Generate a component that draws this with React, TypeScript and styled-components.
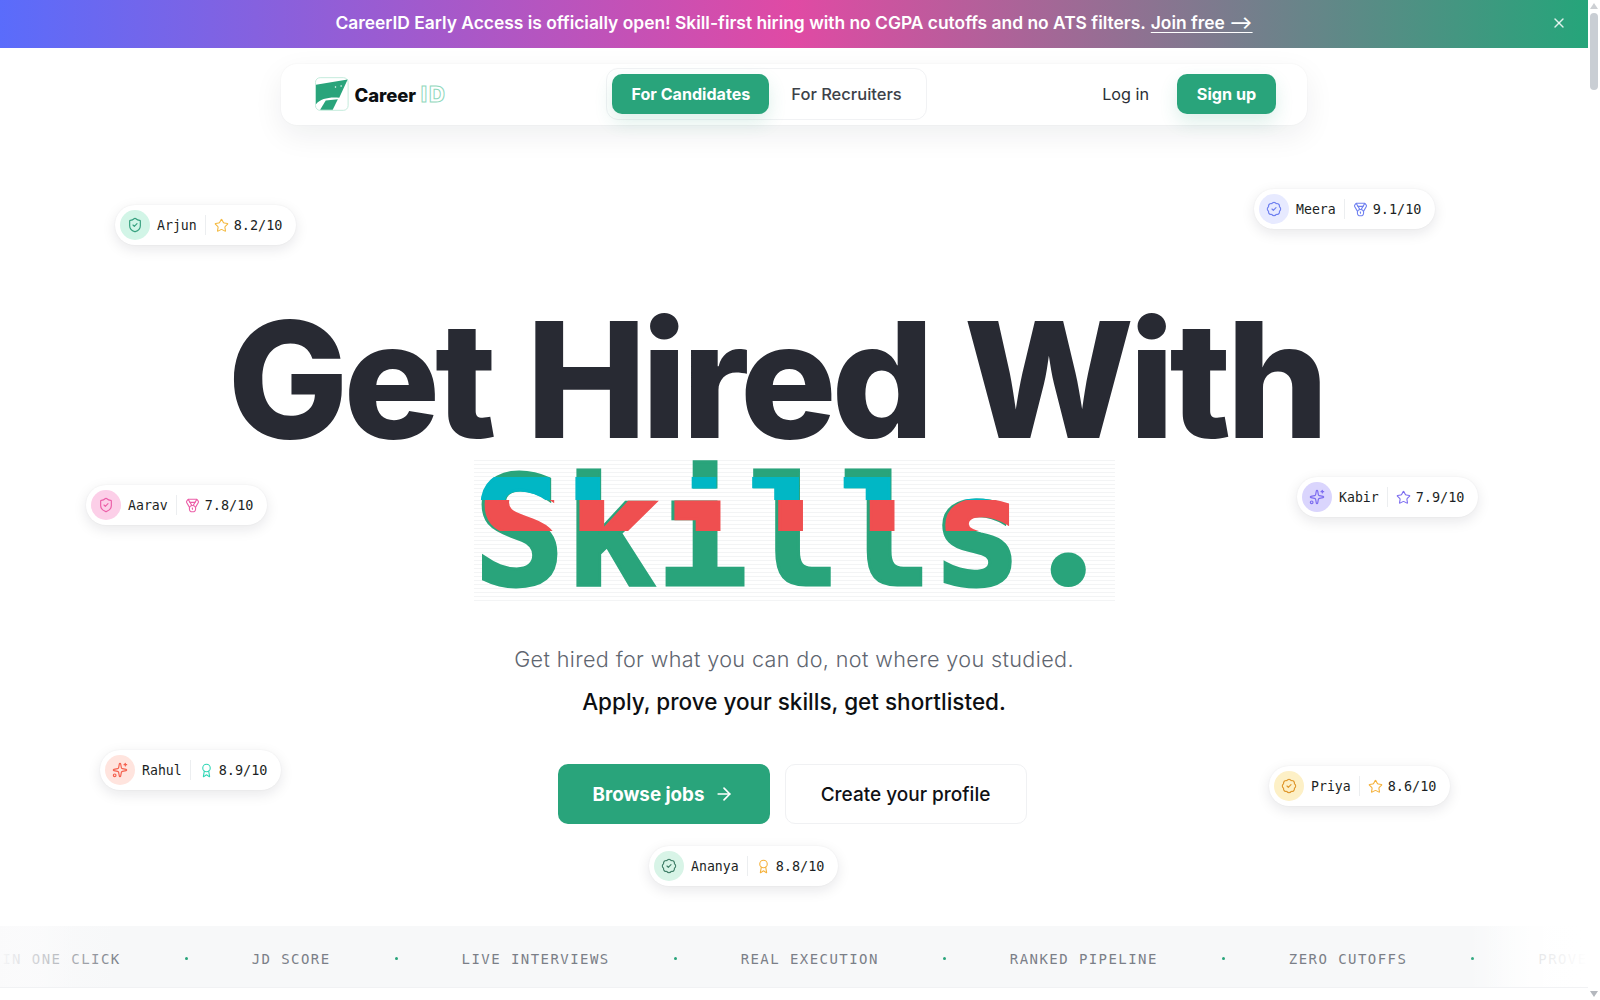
import React from "react";
import styled, { createGlobalStyle } from "styled-components";
import { ArrowRight, Award, BadgeCheck, Medal, ShieldCheck, Sparkles, Star, X } from "lucide-react";

const GlobalStyle = createGlobalStyle`
  html, body {
    margin: 0;
    padding: 0;
    background: #fff;
    overflow: hidden;
  }
  * { box-sizing: border-box; }
  body {
    font-family: Inter, "Noto Sans", sans-serif;
    color: #111318;
  }
`;

const GREEN = "#29a47b";

const Page = styled.div`
  width: 1588px;
  height: 1000px;
  overflow: hidden;
`;

const Banner = styled.div`
  height: 48px;
  padding-bottom: 4px;
  position: relative;
  display: flex;
  align-items: center;
  justify-content: center;
  background: linear-gradient(90deg, #5a6cfb 0%, #e04aa4 50%, #25a57a 100%);
  color: #fff;
  font-size: 17.4px;
  font-weight: 600;
`;

const JoinLink = styled.a`
  margin-left: 5px;
  color: #fff;
  text-decoration: underline;
  text-underline-offset: 3px;
`;

const CloseButton = styled.button`
  position: absolute;
  right: 21px;
  top: 15px;
  padding: 0;
  display: flex;
  border: none;
  background: none;
  color: rgba(255, 255, 255, 0.85);
`;

const Hero = styled.section`
  position: relative;
  height: 878px;
  display: flex;
  flex-direction: column;
  align-items: center;
  padding-top: 16px;
`;

const Nav = styled.nav`
  width: 1026px;
  height: 61px;
  padding: 0 31px 2px 34px;
  display: flex;
  align-items: center;
  justify-content: space-between;
  background: #fff;
  border-radius: 16px;
  box-shadow: 0 10px 30px rgba(17, 24, 39, 0.07), 0 0 2px rgba(17, 24, 39, 0.05);
`;

const Logo = styled.div`
  width: 132px;
  display: flex;
  align-items: center;
  gap: 6px;
`;

const LogoWord = styled.span`
  font-size: 18.5px;
  font-weight: 800;
  letter-spacing: -0.1px;
  color: #0c0f12;
  white-space: nowrap;
`;

const LogoId = styled.span`
  margin-left: 1px;
  font-size: 22px;
  font-weight: 800;
  letter-spacing: 2px;
  color: #fff;
  -webkit-text-stroke: 1px #8fd8bc;
`;

const Tabs = styled.div`
  display: flex;
  gap: 3px;
  padding: 5px;
  border: 1px solid #f1f2f4;
  border-radius: 12px;
`;

const Tab = styled.button<{ $active?: boolean }>`
  height: 40px;
  padding: 0 19px;
  border: none;
  border-radius: 10px;
  font-family: inherit;
  font-size: ${({ $active }) => ($active ? "16.1px" : "16.5px")};
  font-weight: ${({ $active }) => ($active ? 700 : 500)};
  background: ${({ $active }) => ($active ? GREEN : "transparent")};
  color: ${({ $active }) => ($active ? "#fff" : "#3d4249")};
  box-shadow: ${({ $active }) => ($active ? "0 8px 18px rgba(41, 164, 123, 0.16)" : "none")};
`;

const NavActions = styled.div`
  display: flex;
  align-items: center;
  gap: 12px;
`;

const LoginButton = styled.button`
  height: 40px;
  padding: 0 16px;
  border: none;
  background: none;
  font-family: inherit;
  font-size: 16.2px;
  font-weight: 400;
  color: #2a2f36;
`;

const SignupButton = styled.button`
  height: 40px;
  width: 99px;
  border: none;
  border-radius: 10px;
  background: ${GREEN};
  color: #fff;
  font-family: inherit;
  font-size: 16.2px;
  font-weight: 700;
  box-shadow: 0 8px 18px rgba(41, 164, 123, 0.16);
`;

const Heading = styled.h1`
  margin: 0;
  padding-top: 174px;
  display: flex;
  flex-direction: column;
  align-items: center;
`;

const HeadingLine = styled.span`
  height: 161px;
  margin-right: 37px;
  font-size: 161px;
  font-weight: 800;
  line-height: 162px;
  letter-spacing: -5.2px;
  word-spacing: 5px;
  color: #282a33;
  white-space: nowrap;
`;

const band = (top: number, bottom: number) => `inset(${top}px -10px ${142 - bottom}px -10px)`;

const GlitchWord = styled.span`
  position: relative;
  display: block;
  width: 641px;
  height: 142px;
  font-family: "DejaVu Sans Mono", "Liberation Mono", monospace;
  font-size: 152px;
  font-weight: 700;
  line-height: 146px;
  letter-spacing: 0;
  white-space: nowrap;
  color: ${GREEN};
  -webkit-text-stroke: 3px currentColor;
  background: repeating-linear-gradient(180deg, #f3f4f5 0 1px, #fff 1px 4px);

  &::before,
  &::after {
    content: attr(data-text);
    position: absolute;
    inset: 0;
  }
  &::before {
    color: #01b7c5;
    clip-path: ${band(17, 40)};
    transform: translateX(-1px);
  }
  &::after {
    color: #ef4f50;
    clip-path: ${band(40, 71)};
    transform: translateX(3px);
  }
`;

const GlitchDot = styled.span`
  display: inline-block;
  width: 91.5px;
  font-family: Inter, sans-serif;
  font-size: 190px;
  font-weight: 800;
  line-height: 0;
  text-align: center;
  -webkit-text-stroke: 0;
`;

const Subtitle = styled.p`
  margin: 43px 0 0;
  font-size: 21.6px;
  font-weight: 300;
  line-height: 28px;
  letter-spacing: 0.37px;
  color: #5f6670;
`;

const Lead = styled.p`
  margin: 15px 0 0;
  font-size: 22.5px;
  font-weight: 450;
  line-height: 28px;
  color: #0d0f12;
`;

const CtaRow = styled.div`
  margin-top: 48px;
  margin-right: 4px;
  display: flex;
  gap: 15px;
`;

const PrimaryCta = styled.button`
  width: 212px;
  height: 60px;
  display: flex;
  align-items: center;
  justify-content: center;
  gap: 10px;
  border: none;
  border-radius: 10px;
  background: ${GREEN};
  color: #fff;
  font-family: inherit;
  font-size: 18.8px;
  font-weight: 700;
`;

const SecondaryCta = styled.button`
  width: 242px;
  height: 60px;
  border: 1px solid #f0f1f3;
  border-radius: 10px;
  background: #fff;
  color: #0f1115;
  font-family: inherit;
  font-size: 19px;
  font-weight: 500;
`;

const Pill = styled.div<{ $x: number; $y: number }>`
  position: absolute;
  left: ${({ $x }) => $x}px;
  top: ${({ $y }) => $y}px;
  height: 40px;
  padding: 0 14px 0 5px;
  display: flex;
  align-items: center;
  background: #fff;
  border-radius: 20px;
  box-shadow: 0 4px 14px rgba(17, 24, 39, 0.1), 0 0 2px rgba(17, 24, 39, 0.06);
  font-family: "DejaVu Sans Mono", "Liberation Mono", monospace;
  color: #1c1f24;
  white-space: nowrap;
`;

const PillAvatar = styled.span<{ $bg: string; $fg: string }>`
  width: 30px;
  height: 30px;
  display: flex;
  align-items: center;
  justify-content: center;
  border-radius: 50%;
  background: ${({ $bg }) => $bg};
  color: ${({ $fg }) => $fg};
`;

const PillName = styled.span`
  margin-left: 7px;
  font-size: 13.2px;
`;

const PillScore = styled.span<{ $fg: string }>`
  margin-left: 8px;
  padding-left: 8px;
  display: flex;
  align-items: center;
  gap: 5px;
  border-left: 1px solid #eceef0;
  font-size: 13.5px;
  line-height: 20px;

  svg {
    color: ${({ $fg }) => $fg};
  }
`;

const Ticker = styled.div`
  position: absolute;
  left: 0;
  right: 0;
  top: 878px;
  height: 62px;
  padding-top: 4px;
  display: flex;
  align-items: center;
  gap: 64px;
  overflow: hidden;
  background: linear-gradient(90deg, #fff 0, #f7f8f9 72px, #f7f8f9 calc(100% - 100px), #fff 100%);
  border-bottom: 1px solid #f1f2f4;
  font-family: "DejaVu Sans Mono", "Liberation Mono", monospace;
  font-size: 14px;
  letter-spacing: 1.44px;
  color: #7b7f88;
  white-space: nowrap;

  &::before,
  &::after {
    content: "";
    position: absolute;
    top: 0;
    bottom: -1px;
    width: 120px;
    z-index: 1;
  }
  &::before {
    left: 0;
    background: linear-gradient(90deg, rgba(250, 250, 251, 0.98), rgba(247, 248, 249, 0));
  }
  &::after {
    right: 0;
    background: linear-gradient(270deg, #fff, rgba(255, 255, 255, 0.8) 45%, rgba(255, 255, 255, 0));
  }
`;

const TickerItem = styled.span<{ $offset?: number }>`
  flex: none;
  margin-left: ${({ $offset }) => $offset ?? 0}px;
`;

const TickerDot = styled.span`
  flex: none;
  width: 3px;
  height: 3px;
  border-radius: 50%;
  background: ${GREEN};
`;

const ScrollTrack = styled.div`
  position: fixed;
  top: 0;
  right: 0;
  width: 12px;
  height: 1000px;
  background: #fff;
`;

const ScrollThumb = styled.div`
  position: absolute;
  top: 13px;
  left: 2px;
  width: 8px;
  height: 77px;
  border-radius: 4px;
  background: #c9ced4;
`;

const ScrollArrow = styled.div<{ $down?: boolean }>`
  position: absolute;
  left: 2px;
  ${({ $down }) => ($down ? "bottom: 3px;" : "top: 3px;")}
  width: 0;
  height: 0;
  border-left: 4px solid transparent;
  border-right: 4px solid transparent;
  ${({ $down }) =>
    $down ? "border-top: 6px solid #b4b8be;" : "border-bottom: 6px solid #cdd0d4;"}
`;

const people = [
  { name: "Arjun", score: "8.2/10", x: 115, y: 157, bg: "#d2f5e7", fg: "#36a07f", Icon: ShieldCheck, Mark: Star, mark: "#f4b93f" },
  { name: "Meera", score: "9.1/10", x: 1254, y: 141, bg: "#e7eaff", fg: "#6f80f0", Icon: BadgeCheck, Mark: Medal, mark: "#6f80f0" },
  { name: "Aarav", score: "7.8/10", x: 86, y: 437, bg: "#fccfe8", fg: "#ec5fa8", Icon: ShieldCheck, Mark: Medal, mark: "#ec5fa8" },
  { name: "Kabir", score: "7.9/10", x: 1297, y: 429, bg: "#dad5fd", fg: "#7c6cf0", Icon: Sparkles, Mark: Star, mark: "#7c6cf0" },
  { name: "Rahul", score: "8.9/10", x: 100, y: 702, bg: "#ffe4de", fg: "#f4614f", Icon: Sparkles, Mark: Award, mark: "#2fd6b5" },
  { name: "Priya", score: "8.6/10", x: 1269, y: 718, bg: "#fdf0c6", fg: "#df982e", Icon: BadgeCheck, Mark: Star, mark: "#f5b13a" },
  { name: "Ananya", score: "8.8/10", x: 649, y: 798, bg: "#d8f4e7", fg: "#42806a", Icon: BadgeCheck, Mark: Award, mark: "#f5b13a" },
];

const tickerItems = [
  "APPLY IN ONE CLICK",
  "JD SCORE",
  "LIVE INTERVIEWS",
  "REAL EXECUTION",
  "RANKED PIPELINE",
  "ZERO CUTOFFS",
  "PROVEN SKILLS",
];

function LogoMark() {
  return (
    <svg width="36" height="36" viewBox="0 0 36 36" fill="none">
      <rect x="0.5" y="0.5" width="35" height="35" rx="5" fill="#fff" stroke="#bfe9d9" />
      <path d="M1 8 L35 2.5 L26 22 C15 21 6 23 1 29 Z" fill={GREEN} />
      <path d="M5.5 35 L11.5 25 L24.5 23.5 L19 35 Z" fill={GREEN} />
      <circle cx="22" cy="10.5" r="0.8" fill="#fff" />
      <circle cx="28" cy="9.5" r="0.8" fill="#fff" />
    </svg>
  );
}

export default function App() {
  return (
    <>
      <GlobalStyle />
      <Page>
        <Banner>
          CareerID Early Access is officially open! Skill-first hiring with no CGPA cutoffs and no ATS filters.
          <JoinLink href="#">Join free ⟶</JoinLink>
          <CloseButton aria-label="Close">
            <X size={16} />
          </CloseButton>
        </Banner>
        <Hero>
          <Nav>
            <Logo>
              <LogoMark />
              <LogoWord>
                Career <LogoId>ID</LogoId>
              </LogoWord>
            </Logo>
            <Tabs>
              <Tab $active>For Candidates</Tab>
              <Tab>For Recruiters</Tab>
            </Tabs>
            <NavActions>
              <LoginButton>Log in</LoginButton>
              <SignupButton>Sign up</SignupButton>
            </NavActions>
          </Nav>
          <Heading>
            <HeadingLine>Get Hired With</HeadingLine>
            <GlitchWord data-text="Skills">
              Skills<GlitchDot>.</GlitchDot>
            </GlitchWord>
          </Heading>
          <Subtitle>Get hired for what you can do, not where you studied.</Subtitle>
          <Lead>Apply, prove your skills, get shortlisted.</Lead>
          <CtaRow>
            <PrimaryCta>
              Browse jobs <ArrowRight size={20} />
            </PrimaryCta>
            <SecondaryCta>Create your profile</SecondaryCta>
          </CtaRow>
          {people.map(({ name, score, x, y, bg, fg, Icon, Mark, mark }) => (
            <Pill key={name} $x={x} $y={y}>
              <PillAvatar $bg={bg} $fg={fg}>
                <Icon size={16} strokeWidth={1.75} />
              </PillAvatar>
              <PillName>{name}</PillName>
              <PillScore $fg={mark}>
                <Mark size={15} strokeWidth={1.75} />
                {score}
              </PillScore>
            </Pill>
          ))}
          <Ticker>
            {tickerItems.map((item, i) => (
              <React.Fragment key={item}>
                <TickerItem $offset={i === 0 ? -57 : 0}>{item}</TickerItem>
                {i < tickerItems.length - 1 && <TickerDot />}
              </React.Fragment>
            ))}
          </Ticker>
        </Hero>
      </Page>
      <ScrollTrack aria-hidden>
        <ScrollArrow />
        <ScrollThumb />
        <ScrollArrow $down />
      </ScrollTrack>
    </>
  );
}
